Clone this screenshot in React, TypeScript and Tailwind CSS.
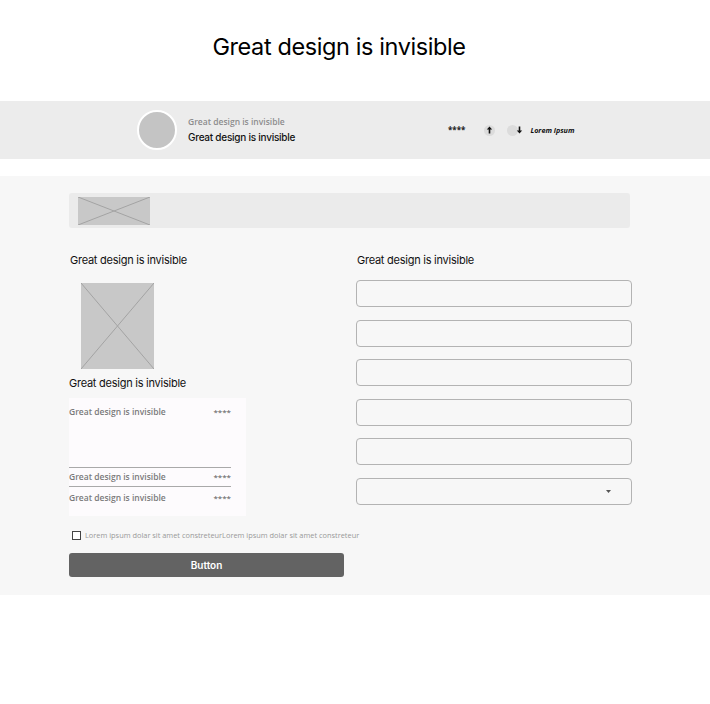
import React from "react";

const X = ({ className }: { className?: string }) => (
  <div className={"relative bg-[#c8c8c8] " + (className ?? "")}>
    <svg className="absolute inset-0 h-full w-full" preserveAspectRatio="none" viewBox="0 0 100 100">
      <line x1="0" y1="0" x2="100" y2="100" stroke="#a3a3a3" strokeWidth="1" vectorEffect="non-scaling-stroke" />
      <line x1="100" y1="0" x2="0" y2="100" stroke="#a3a3a3" strokeWidth="1" vectorEffect="non-scaling-stroke" />
    </svg>
  </div>
);

const Input = ({ select }: { select?: boolean }) => (
  <div className="flex h-[27px] w-[276px] items-center justify-end rounded-[4px] border border-[#b3b3b3] bg-[#f7f7f7] pr-[20px]">
    {select && (
      <svg width="5" height="3" viewBox="0 0 5 3">
        <path d="M0 0 L5 0 L2.5 3 Z" fill="#555" />
      </svg>
    )}
  </div>
);

const Row = () => (
  <div className="flex h-[12px] w-[162px] items-center justify-between">
    <span className="text-[8.5px] font-semibold leading-[12px] text-[#7a7a7a]">Great design is invisible</span>
    <span className="text-[8px] leading-[12px] text-[#555]">****</span>
  </div>
);

export default function App() {
  const jak = { fontFamily: "Inter, 'Noto Sans', sans-serif" };
  const pop = { fontFamily: "'Open Sans', 'Noto Sans', sans-serif" };
  return (
    <div className="h-[704px] w-[710px] bg-white" style={jak}>
      <div className="flex h-[101px] items-start justify-center pt-[32px] pr-[32px]">
        <h1 className="text-[23.5px] leading-[30px] tracking-[-0.4px] text-black">Great design is invisible</h1>
      </div>
      <div className="flex h-[58px] items-center bg-[#ececec] pl-[137px]">
        <div className="h-[40px] w-[40px] rounded-full border-2 border-white bg-[#c4c4c4]" />
        <div className="ml-[11px] flex w-[106px] flex-col">
          <span className="whitespace-nowrap text-[8.5px] font-semibold leading-[12px] text-[#8d8d8d]" style={pop}>Great design is invisible</span>
          <span className="mt-[3px] whitespace-nowrap text-[10px] font-medium leading-[13px] tracking-[-0.25px] text-[#111]">Great design is invisible</span>
        </div>
        <div className="ml-[154px] flex items-center" style={pop}>
          <span className="text-[8px] font-bold text-[#222]">****</span>
          <div className="ml-[19px] flex h-[11px] w-[11px] items-center justify-center rounded-full bg-[#dcdcdc]">
            <svg width="7" height="8" viewBox="0 0 7 8">
              <path d="M3.5 0.5 L0.8 3.5 H2.7 V7.5 H4.3 V3.5 H6.2 Z" fill="#111" />
            </svg>
          </div>
          <div className="ml-[12px] h-[11px] w-[11px] rounded-full bg-[#dcdcdc]" />
          <svg className="-ml-[2px]" width="7" height="8" viewBox="0 0 7 8">
            <path d="M3.5 7.5 L0.8 4.5 H2.7 V0.5 H4.3 V4.5 H6.2 Z" fill="#111" />
          </svg>
          <span className="ml-[7px] text-[7.2px] font-bold italic text-[#111]">Lorem ipsum</span>
        </div>
      </div>
      <div className="mt-[17px] h-[419px] bg-[#f7f7f7] px-[69px] pt-[17px]">
        <div className="flex h-[35px] w-[561px] items-center rounded-[3px] bg-[#ebebeb] pl-[9px]">
          <X className="h-[28px] w-[72px]" />
        </div>
        <div className="mt-[25px] flex">
          <div className="flex w-[287px] flex-col">
            <h2 className="ml-[1px] text-[11px] leading-[14px] tracking-[-0.25px] text-[#111]">Great design is invisible</h2>
            <X className="ml-[12px] mt-[16px] h-[86px] w-[73px]" />
            <h2 className="mt-[7px] text-[11px] leading-[14px] tracking-[-0.25px] text-[#111]">Great design is invisible</h2>
            <div className="mt-[8px] flex h-[118px] w-[177px] flex-col bg-[#fdfbfd] pt-[8px]" style={pop}>
              <Row />
              <div className="mt-[49px] w-[162px] border-t border-[#a9a9a9] pt-[3px]">
                <Row />
              </div>
              <div className="mt-[3px] w-[162px] border-t border-[#a9a9a9] pt-[5px]">
                <Row />
              </div>
            </div>
          </div>
          <div className="flex flex-col">
            <h2 className="ml-[1px] text-[11px] leading-[14px] tracking-[-0.25px] text-[#111]">Great design is invisible</h2>
            <div className="mt-[13px] flex flex-col gap-[12.6px]">
              <Input />
              <Input />
              <Input />
              <Input />
              <Input />
              <Input select />
            </div>
          </div>
        </div>
        <div className="mt-[14px] flex items-center pl-[3px]" style={pop}>
          <div className="h-[9px] w-[9px] border border-[#444] bg-white" />
          <span className="ml-[4px] whitespace-nowrap text-[7.4px] text-[#999]">Lorem ipsum dolar sit amet constreteurLorem ipsum dolar sit amet constreteur</span>
        </div>
        <button className="mt-[12px] flex h-[24px] w-[275px] items-center justify-center rounded-[3px] bg-[#636363] text-[10px] font-semibold text-white">
          Button
        </button>
      </div>
    </div>
  );
}
